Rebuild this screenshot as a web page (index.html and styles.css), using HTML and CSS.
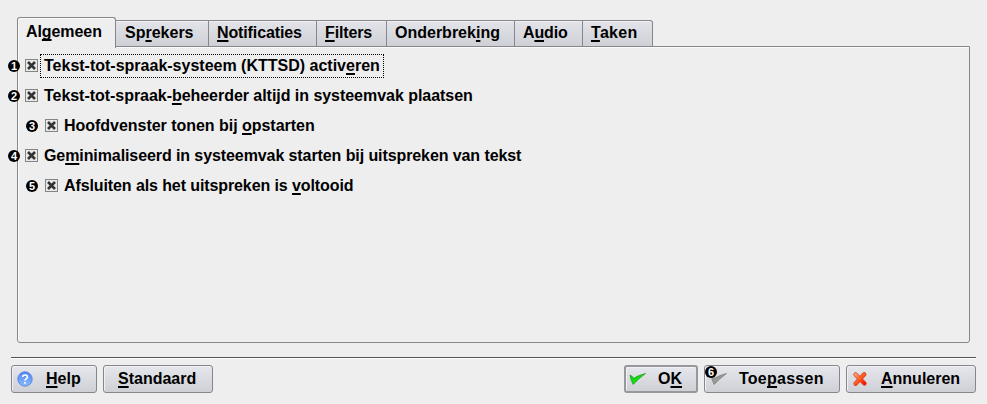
FILE: index.html
```html
<!DOCTYPE html>
<html lang="nl">
<head>
<meta charset="utf-8">
<title>KTTSD</title>
<link rel="stylesheet" href="styles.css">
</head>
<body>
<svg width="0" height="0" class="defs">
  <defs>
    <linearGradient id="blue" x1="0" y1="0" x2="0" y2="1"><stop offset="0" stop-color="#4d86f4"/><stop offset="1" stop-color="#8dbcff"/></linearGradient>
    <linearGradient id="green" x1="0" y1="0" x2="1" y2="1"><stop offset="0" stop-color="#00d800"/><stop offset="1" stop-color="#20e820"/></linearGradient>
    <linearGradient id="red" x1="0" y1="0" x2="1" y2="1"><stop offset="0" stop-color="#ffa070"/><stop offset=".5" stop-color="#ff5a20"/><stop offset="1" stop-color="#ff1000"/></linearGradient>
    <symbol id="cross" viewBox="0 0 11 11"><path d="M2 2L9 9M9 2L2 9" stroke="#333" stroke-width="2.6"/></symbol>
    <symbol id="tick" viewBox="0 0 18 14"><path d="M1 3.2Q2.8 3.3 4.7 6.3Q9.5 3.2 16.5 1.5Q9.5 6.5 4.2 12.5Q2 9 1 3.2Z"/></symbol>
  </defs>
</svg>
<main class="dialog">
  <nav class="tabs">
    <div class="tab active">Al<u>g</u>emeen</div>
    <div class="tab t2">Sp<u>r</u>ekers</div>
    <div class="tab t3"><u>N</u>otificaties</div>
    <div class="tab t4"><u>F</u>ilters</div>
    <div class="tab t5">Onderbrek<u>i</u>ng</div>
    <div class="tab t6">A<u>u</u>dio</div>
    <div class="tab t7"><u>T</u>aken</div>
  </nav>
  <section class="panel">
    <div class="row"><span class="badge">1</span><svg class="check"><use href="#cross"/></svg><span class="label focus">Tekst-tot-spraak-systeem (KTTSD) activ<u>e</u>ren</span></div>
    <div class="row"><span class="badge">2</span><svg class="check"><use href="#cross"/></svg><span class="label l2">Tekst-tot-spraak-<u>b</u>eheerder altijd in systeemvak plaatsen</span></div>
    <div class="row sub"><span class="badge">3</span><svg class="check"><use href="#cross"/></svg><span class="label l3">Hoofdvenster tonen bij <u>o</u>pstarten</span></div>
    <div class="row"><span class="badge">4</span><svg class="check"><use href="#cross"/></svg><span class="label l4">Ge<u>m</u>inimaliseerd in systeemvak starten bij uitspreken van tekst</span></div>
    <div class="row sub"><span class="badge">5</span><svg class="check"><use href="#cross"/></svg><span class="label l5">Afsluiten als het uitspreken is <u>v</u>oltooid</span></div>
  </section>
  <footer class="actions">
    <div class="button help"><svg class="icon" width="16" height="16" viewBox="0 0 16 16"><circle cx="8" cy="8" r="7.2" fill="url(#blue)" stroke="#4779dc" stroke-width=".8"/><path d="M5.7 6.1Q5.7 4 8 4Q10.4 4 10.4 6Q10.4 7.3 9 8Q8 8.5 8 9.7M8 11V12.8" fill="none" stroke="#fff" stroke-width="1.7"/></svg><span><u>H</u>elp</span></div>
    <div class="button default"><span><u>S</u>tandaard</span></div>
    <div class="button ok"><svg class="icon" width="18" height="14"><use href="#tick" fill="url(#green)" stroke="#159015" stroke-width=".7"/></svg><span>O<u>K</u></span></div>
    <div class="button apply"><span class="badge">6</span><svg class="icon" width="18" height="14"><use href="#tick" fill="#999" stroke="#777" stroke-width=".7"/></svg><span>Toe<u>p</u>assen</span></div>
    <div class="button cancel"><svg class="icon" width="16" height="16" viewBox="0 0 16 16"><path d="M3.5 3.5L12.5 12.5M12.3 3.3L3.5 12.7" stroke="#d04020" stroke-width="4.3" stroke-linecap="round"/><path d="M3.5 3.5L12.5 12.5M12.3 3.3L3.5 12.7" stroke="url(#red)" stroke-width="3" stroke-linecap="round"/></svg><span><u>A</u>nnuleren</span></div>
  </footer>
</main>
</body>
</html>
```
FILE: styles.css
```css
* { box-sizing: border-box; }
body {
  margin: 0;
  height: 404px;
  overflow: hidden;
  background: #eee;
  color: #000;
  font: bold 16px/18px "Liberation Sans", Arial, sans-serif;
  white-space: nowrap;
}
.defs { display: block; }
.dialog { padding: 17px 11px 0; }
u { text-decoration-thickness: 1.5px; text-underline-offset: 2px; text-decoration-skip-ink: none; }
.tabs { display: flex; align-items: flex-end; height: 30px; margin-left: 6px; }
.tab {
  height: 27px;
  padding: 3px 0 0 8px;
  border: 1px solid #85878a;
  border-left: 0;
  background: linear-gradient(#e3e4e9, #cfd0d6);
  box-shadow: inset 0 1px #f1f1f4;
}
.tab.active {
  position: relative;
  width: 99px;
  height: 31px;
  margin-bottom: -1px;
  padding: 5px 0 0 8px;
  border: 1px solid #85878a;
  border-bottom: 0;
  border-radius: 3px 3px 0 0;
  background: #eee;
  box-shadow: inset 1px 1px #fafafa;
  letter-spacing: -.08px;
}
.t2 { width: 93px; padding-left: 9px; }
.t3 { width: 108px; letter-spacing: -.12px; }
.t4 { width: 70px; letter-spacing: -.15px; }
.t5 { width: 128px; }
.t6 { width: 68px; letter-spacing: -.15px; }
.t7 { width: 70px; border-top-right-radius: 3px; letter-spacing: .3px; }
.panel {
  width: 953px;
  height: 297px;
  margin: -1px 0 0 6px;
  padding-top: 4px;
  border: 1px solid #85878a;
  border-radius: 0 0 3px 3px;
  box-shadow: inset 1px 1px #fafafa;
}
.row { display: flex; align-items: center; height: 30px; margin-left: -10px; }
.sub { margin-left: 8px; }
.badge {
  width: 12px;
  height: 12px;
  border-radius: 50%;
  background: #000;
  color: #fff;
  font-size: 11px;
  line-height: 12px;
  text-align: center;
}
.check {
  width: 13px;
  height: 13px;
  margin: 0 0 2px 5px;
  border: 1px solid #858585;
  background: #e9e9e9;
}
.sub .check { margin-left: 7px; }
.label { margin-left: 2px; padding: 2px 3px; border: 1px dotted transparent; }
.focus { border-color: #000; }
.l2 { letter-spacing: -.04px; }
.l3 { letter-spacing: -.03px; }
.l4 { letter-spacing: -.09px; }
.l5 { letter-spacing: -.1px; }
.actions {
  display: flex;
  height: 48px;
  margin-top: 14px;
  padding-top: 7px;
  border-top: 1px solid #555;
  box-shadow: inset 0 1px #fff;
}
.button {
  position: relative;
  display: flex;
  align-items: center;
  height: 28px;
  border: 1px solid #85878a;
  border-radius: 3px;
  background: linear-gradient(#e6e7ec, #ced0d6);
  box-shadow: inset 1px 1px #f1f1f5;
}
.help { width: 86px; padding-left: 5px; }
.help .icon { margin-right: 13px; }
.default { width: 110px; margin-left: 6px; padding-left: 14px; }
.ok {
  width: 74px;
  margin-left: auto;
  padding-left: 3px;
  border: 2px solid #96989b;
}
.ok .icon { margin: 0 11px 1px 0; }
.apply { width: 136px; margin-left: 6px; padding-left: 5px; letter-spacing: .25px; }
.apply .icon { margin: 0 11px 1px 0; }
.apply .badge { position: absolute; left: 0; top: 0; letter-spacing: 0; }
.cancel { width: 130px; margin-left: 6px; padding-left: 5px; }
.cancel .icon { margin-right: 13px; }
```
